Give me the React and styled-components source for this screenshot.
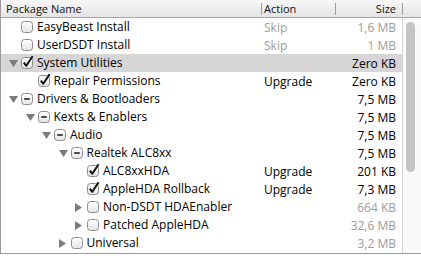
import React from 'react'
import styled, { createGlobalStyle } from 'styled-components'

const GlobalStyle = createGlobalStyle`
  html, body {
    margin: 0;
    padding: 0;
    background: #ffffff;
  }
  body {
    font-family: "Open Sans", "DejaVu Sans", sans-serif;
    color: #000;
  }
`

const packages = [
  { name: 'EasyBeast Install', level: 0, state: 'off', action: 'Skip', size: '1,6 MB', dim: true },
  { name: 'UserDSDT Install', level: 0, state: 'off', action: 'Skip', size: '1 MB', dim: true },
  { name: 'System Utilities', level: 0, state: 'on', open: true, size: 'Zero KB', selected: true },
  { name: 'Repair Permissions', level: 1, state: 'on', action: 'Upgrade', size: 'Zero KB' },
  { name: 'Drivers & Bootloaders', level: 0, state: 'mixed', open: true, size: '7,5 MB' },
  { name: 'Kexts & Enablers', level: 1, state: 'mixed', open: true, size: '7,5 MB' },
  { name: 'Audio', level: 2, state: 'mixed', open: true, size: '7,5 MB' },
  { name: 'Realtek ALC8xx', level: 3, state: 'mixed', open: true, size: '7,5 MB' },
  { name: 'ALC8xxHDA', level: 4, state: 'on', action: 'Upgrade', size: '201 KB' },
  { name: 'AppleHDA Rollback', level: 4, state: 'on', action: 'Upgrade', size: '7,3 MB' },
  { name: 'Non-DSDT HDAEnabler', level: 4, state: 'off', open: false, size: '664 KB', sizeDim: true },
  { name: 'Patched AppleHDA', level: 4, state: 'off', open: false, size: '32,6 MB', sizeDim: true },
  { name: 'Universal', level: 3, state: 'off', open: false, size: '3,2 MB', sizeDim: true },
]

const Disclosure = ({ open }) => (
  <TriangleSlot>
    {open === true && (
      <svg width="9" height="7" viewBox="0 0 9 7">
        <polygon points="0,0 9,0 4.5,7" fill="#7b7b7b" />
      </svg>
    )}
    {open === false && (
      <svg width="7" height="9" viewBox="0 0 7 9">
        <polygon points="0,0 7,4.5 0,9" fill="#7b7b7b" />
      </svg>
    )}
  </TriangleSlot>
)

const Check = ({ state }) => (
  <CheckSlot>
    <svg width="14" height="15" viewBox="0 0 14 15">
      <defs>
        <linearGradient id="boxfill" x1="0" y1="0" x2="0" y2="1">
          <stop offset="0" stopColor="#ffffff" />
          <stop offset="1" stopColor="#e4e4e4" />
        </linearGradient>
      </defs>
      <rect x="0.5" y="2.5" width="11" height="11" rx="3" fill="url(#boxfill)" stroke="#8c8c8c" />
      {state === 'on' && (
        <path d="M2.8 7.6 L5.3 10.8 L11.6 1.2" fill="none" stroke="#111" strokeWidth="2" strokeLinejoin="round" />
      )}
      {state === 'mixed' && (
        <line x1="3.2" y1="8" x2="8.8" y2="8" stroke="#222" strokeWidth="1.6" />
      )}
    </svg>
  </CheckSlot>
)

export default function App() {
  return (
    <>
      <GlobalStyle />
      <Frame>
        <Header>
          <NameHead>Package Name</NameHead>
          <Divider />
          <ActionHead>Action</ActionHead>
          <Divider />
          <SizeHead>Size</SizeHead>
          <Divider />
        </Header>
        <Body>
          <Rows>
            {packages.map(p => (
              <Row key={p.name} selected={p.selected}>
                <NameCell level={p.level}>
                  <Disclosure open={p.open} />
                  <Check state={p.state} />
                  <Label>{p.name}</Label>
                </NameCell>
                <ActionCell dim={p.dim}>{p.action}</ActionCell>
                <SizeCell dim={p.dim || p.sizeDim}>{p.size}</SizeCell>
              </Row>
            ))}
          </Rows>
          <Track>
            <Thumb />
          </Track>
        </Body>
      </Frame>
    </>
  )
}

const Frame = styled.div`
  width: 420px;
  height: 253px;
  border-left: 1px solid #9a9a9a;
  border-bottom: 1px solid #9a9a9a;
  display: flex;
  flex-direction: column;
  overflow: hidden;
  background: #fff;
`

const Header = styled.div`
  height: 17px;
  flex: none;
  display: flex;
  align-items: center;
  background: linear-gradient(#f7f7f7, #e4e4e4);
  border-bottom: 1px solid #a6a6a6;
  font-size: 11px;
  color: #111;
`

const NameHead = styled.div`
  width: 255px;
  padding-left: 5px;
`

const Divider = styled.div`
  width: 1px;
  height: 12px;
  background: #9e9e9e;
  flex: none;
`

const ActionHead = styled.div`
  width: 71px;
  padding-left: 2px;
`

const SizeHead = styled.div`
  width: 60px;
  padding-right: 6px;
  text-align: right;
`

const Body = styled.div`
  flex: 1;
  display: flex;
  min-height: 0;
`

const Rows = styled.div`
  width: 401px;
  display: flex;
  flex-direction: column;
`

const Row = styled.div`
  height: 18px;
  flex: none;
  display: grid;
  grid-template-columns: 261px 73px 67px;
  align-items: center;
  font-size: 12px;
  background: ${p => (p.selected ? '#d6d6d6' : 'transparent')};
`

const NameCell = styled.div`
  display: flex;
  align-items: center;
  padding-left: ${p => 7 + p.level * 16.5}px;
  white-space: nowrap;
`

const TriangleSlot = styled.span`
  width: 13px;
  height: 18px;
  flex: none;
  display: flex;
  align-items: center;
  padding-left: 1px;
  box-sizing: border-box;
`

const CheckSlot = styled.span`
  width: 16px;
  height: 18px;
  flex: none;
  display: flex;
  align-items: center;
  margin-top: -2px;
`

const Label = styled.span`
  line-height: 18px;
`

const ActionCell = styled.div`
  padding-left: 2px;
  color: ${p => (p.dim ? '#9c9c9c' : '#000')};
`

const SizeCell = styled.div`
  text-align: right;
  padding-right: 6px;
  color: ${p => (p.dim ? '#9c9c9c' : '#000')};
`

const Track = styled.div`
  flex: 1;
  border-left: 1px solid #d4d4d4;
  background: #fafafa;
  padding: 4px 5px 0 3px;
`

const Thumb = styled.div`
  width: 9px;
  height: 150px;
  border-radius: 5px;
  background: #c4c4c4;
`
